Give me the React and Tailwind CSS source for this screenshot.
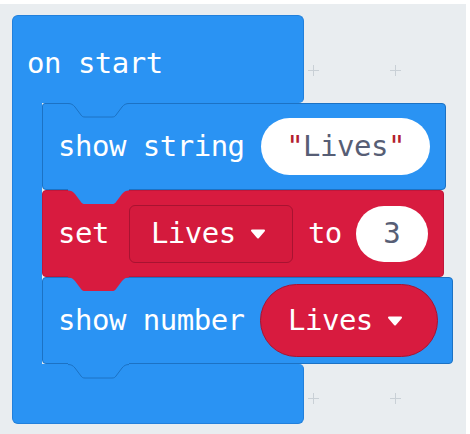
import React from "react";

function Notch({ fill, stroke, className }) {
  return (
    <svg
      className={"absolute pointer-events-none " + className}
      width="100"
      height="18"
      viewBox="0 0 100 18"
    >
      <path
        d="M25 0 H86 V2.5 C83 2.5 81 3.5 79 6 L73 14 C72 15.5 71 16 69 16 H42 C40 16 39 15.5 38 14 L32 6 C30 3.5 28 2.5 25 2.5 Z"
        fill={fill}
      />
      {stroke ? (
        <path
          d="M25 2.5 C28 2.5 30 3.5 32 6 L38 14 C39 15.5 40 16 42 16 H69 C71 16 72 15.5 73 14 L79 6 C81 3.5 83 2.5 86 2.5"
          fill="none"
          stroke={stroke}
          strokeWidth="1"
        />
      ) : null}
    </svg>
  );
}

function Caret({ w = 16 }) {
  return (
    <svg width={w} height="10" viewBox="0 0 16 10" className="shrink-0">
      <path d="M2 1.5 L14 1.5 L8 8.5 Z" fill="#ffffff" stroke="#ffffff" strokeWidth="2" strokeLinejoin="round" />
    </svg>
  );
}

function Plus({ className }) {
  return (
    <svg className={"absolute " + className} width="11" height="11" viewBox="0 0 11 11">
      <path d="M5.5 0 V11 M0 5.5 H11" stroke="#c9d0d6" strokeWidth="1" />
    </svg>
  );
}

export default function App() {
  return (
    <div className="w-[470px] h-[434px] bg-white font-['DejaVu_Sans_Mono',monospace] text-[29px] tracking-[-0.5px] text-white leading-none">
      <div className="relative mt-[4px] w-[466px] h-[430px] bg-[#e9edf0] pl-[12px] pt-[11px]">
        <Plus className="left-[308px] top-[61px]" />
        <Plus className="left-[390px] top-[61px]" />
        <Plus className="left-[308px] top-[389px]" />
        <Plus className="left-[390px] top-[389px]" />

        <div className="relative flex flex-col">
          {/* top arm */}
          <div className="w-[292px] h-[88px] bg-[#2a93f3] rounded-t-[6px] rounded-br-[5px] border-t border-l border-r border-[#2180dc] flex items-center pl-[14px] pt-[8px]">
            <span>on start</span>
          </div>

          {/* middle */}
          <div className="flex">
            <div className="w-[30px] bg-[#2a93f3] border-l border-[#2180dc]" />
            <div className="flex flex-col">
              {/* show string */}
              <div className="relative w-[404px] h-[87px] bg-[#2a93f3] border border-[#1c72c4] rounded-[4px] rounded-tl-[3px] flex items-center justify-between pl-[15px] pr-[15px]">
                <Notch className="left-0 top-[-3px]" fill="#2a93f3" stroke="#1c72c4" />
                <span>show string</span>
                <div className="w-[169px] h-[57px] rounded-full bg-white flex items-center justify-center pb-[1px]">
                  <span className="text-[#b3202e]">"</span>
                  <span className="text-[#575e75]">Lives</span>
                  <span className="text-[#b3202e]">"</span>
                </div>
              </div>

              {/* set */}
              <div className="relative w-[402px] h-[87px] bg-[#d81b3f] border border-[#c0163a] rounded-[4px] flex items-center pl-[15px] pr-[14px]">
                <Notch className="left-0 top-[-3px]" fill="#2a93f3" />
                <span>set</span>
                <div className="ml-[20px] w-[164px] h-[58px] rounded-[6px] border border-[#a81331] bg-[#d41a3d] flex items-center pl-[21px] gap-[14px]">
                  <span>Lives</span>
                  <Caret />
                </div>
                <span className="ml-[15px]">to</span>
                <div className="ml-[14px] w-[72px] h-[56px] rounded-full bg-white flex items-center justify-center text-[#575e75]">
                  3
                </div>
              </div>

              {/* show number */}
              <div className="relative w-[411px] h-[87px] bg-[#2a93f3] border border-[#1c72c4] rounded-[4px] flex items-center justify-between pl-[15px] pr-[14px]">
                <Notch className="left-0 top-[-3px]" fill="#d81b3f" />
                <span>show number</span>
                <div className="w-[178px] h-[73px] rounded-full bg-[#d81b3f] border border-[#a81331] flex items-center pl-[27px] gap-[13px]">
                  <span>Lives</span>
                  <Caret w={18} />
                </div>
              </div>
            </div>
          </div>

          {/* bottom arm */}
          <div className="relative w-[292px] h-[60px] bg-[#2a93f3] rounded-b-[6px] rounded-tr-[5px] border-l border-r border-b border-[#2180dc]">
            <Notch className="left-[30px] top-[-2px]" fill="#2a93f3" stroke="#1c72c4" />
          </div>
        </div>
      </div>
    </div>
  );
}
